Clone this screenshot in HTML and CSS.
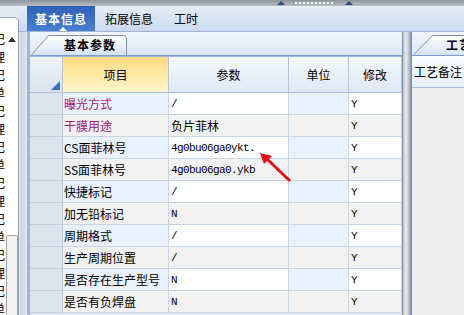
FILE: index.html
```html
<!DOCTYPE html>
<html lang="zh">
<head>
    <meta charset="UTF-8">
    <title>基本信息</title>
    <link rel="stylesheet" href="styles.css">
</head>
<body>
    <div class="topstrip">
        <span class="mark"></span>
        <span class="dots"></span>
        <span class="mark"></span>
    </div>

    <div class="main">
        <div class="leftpanel">
            <div class="lp-top"></div>
            <div class="lp-box">
                <div class="lp-text">
                    <div>看记</div><div>管理</div><div>看记</div><div>工单</div><div>看记</div>
                    <div>管理</div><div>看记</div><div>工单</div><div>看记</div><div>管理</div>
                    <div>看记</div><div>工单</div><div>看记</div><div>管理</div><div>看记</div>
                    <div>工单</div>
                </div>
                <div class="lp-scroll">
                    <div class="lp-up"></div>
                    <div class="lp-track"></div>
                    <div class="lp-thumb"></div>
                </div>
            </div>
        </div>

        <div class="content">
            <div class="tabbar">
                <div class="tab active">基本信息</div>
                <div class="tab">拓展信息</div>
                <div class="tab">工时</div>
            </div>

            <div class="body">
                <div class="gap"></div>

                <div class="workpane">
                    <div class="subtabs">
                        <div class="subtab">
                            <svg class="tabshape" width="96" height="21" viewBox="0 0 96 21">
                                <defs>
                                    <linearGradient id="tg" x1="0" y1="0" x2="0" y2="1">
                                        <stop offset="0" stop-color="#ffffff"/>
                                        <stop offset="1" stop-color="#d6e3f5"/>
                                    </linearGradient>
                                </defs>
                                <path d="M0.5 21 L17.5 1.5 L92 1.5 Q95.5 1.5 95.5 5 L95.5 21" fill="url(#tg)" stroke="#7f90ab"/>
                            </svg>
                            <span class="subtab-label">基本参数</span>
                        </div>
                    </div>

                    <div class="grid">
                        <div class="hd corner"><span class="tri"></span></div>
                        <div class="hd sel">项目</div>
                        <div class="hd">参数</div>
                        <div class="hd">单位</div>
                        <div class="hd">修改</div>

                        <div class="rh"></div>
                        <div class="cell hl item purple">曝光方式</div>
                        <div class="cell val">/</div>
                        <div class="cell hl"></div>
                        <div class="cell val">Y</div>

                        <div class="rh"></div>
                        <div class="cell alt item purple">干膜用途</div>
                        <div class="cell alt cjk">负片菲林</div>
                        <div class="cell alt"></div>
                        <div class="cell alt val">Y</div>

                        <div class="rh"></div>
                        <div class="cell hl item">CS面菲林号</div>
                        <div class="cell val">4g0bu06ga0ykt.</div>
                        <div class="cell hl"></div>
                        <div class="cell val">Y</div>

                        <div class="rh"></div>
                        <div class="cell alt item">SS面菲林号</div>
                        <div class="cell alt val">4g0bu06ga0.ykb</div>
                        <div class="cell alt"></div>
                        <div class="cell alt val">Y</div>

                        <div class="rh"></div>
                        <div class="cell hl item">快捷标记</div>
                        <div class="cell val">/</div>
                        <div class="cell hl"></div>
                        <div class="cell val">Y</div>

                        <div class="rh"></div>
                        <div class="cell alt item">加无铅标记</div>
                        <div class="cell alt val">N</div>
                        <div class="cell alt"></div>
                        <div class="cell alt val">Y</div>

                        <div class="rh"></div>
                        <div class="cell hl item">周期格式</div>
                        <div class="cell val">/</div>
                        <div class="cell hl"></div>
                        <div class="cell val">Y</div>

                        <div class="rh"></div>
                        <div class="cell alt item">生产周期位置</div>
                        <div class="cell alt val">/</div>
                        <div class="cell alt"></div>
                        <div class="cell alt val">Y</div>

                        <div class="rh"></div>
                        <div class="cell hl item">是否存在生产型号</div>
                        <div class="cell val">N</div>
                        <div class="cell hl"></div>
                        <div class="cell val">Y</div>

                        <div class="rh"></div>
                        <div class="cell alt item">是否有负焊盘</div>
                        <div class="cell alt val">N</div>
                        <div class="cell alt"></div>
                        <div class="cell alt val">Y</div>
                    </div>
                </div>

                <div class="splitter"></div>

                <div class="rightpane">
                    <div class="subtabs">
                        <div class="subtab small">
                            <svg class="tabshape" width="60" height="21" viewBox="0 0 60 21">
                                <path d="M0.5 21 L19.5 1.5 L60 1.5 L60 21" fill="url(#tg)" stroke="#7f90ab"/>
                            </svg>
                            <span class="subtab-label">工艺备注</span>
                        </div>
                    </div>
                    <div class="rp-head">工艺备注</div>
                    <div class="rp-body"></div>
                </div>
            </div>
        </div>
    </div>

    <svg class="arrow" width="40" height="40" viewBox="0 0 40 40">
        <line x1="35" y1="33" x2="12" y2="11" stroke="#e01010" stroke-width="3"/>
        <polygon points="5,5 17,8 9,16" fill="#e01010"/>
    </svg>
</body>
</html>
```

FILE: styles.css
```css
* {
    margin: 0;
    padding: 0;
    box-sizing: border-box;
}

body {
    position: relative;
    width: 464px;
    height: 315px;
    overflow: hidden;
    font-family: "Noto Sans CJK SC", sans-serif;
    font-size: 12px;
    color: #000;
    background: #dfe7f2;
}

/* top grip strip */
.topstrip {
    height: 6px;
    background: linear-gradient(#8d939b, #b9bec6);
    display: flex;
    align-items: center;
    padding-left: 277px;
}

.mark {
    width: 0;
    height: 0;
    border-left: 4px solid transparent;
    border-right: 4px solid transparent;
    border-bottom: 4px solid #2f4a78;
}

.dots {
    width: 38px;
    height: 2px;
    margin: 0 12px 0 10px;
    background: repeating-linear-gradient(90deg, #ffffff 0 2px, transparent 2px 4px);
}

.main {
    display: flex;
    height: 309px;
}

/* left list panel */
.leftpanel {
    width: 21px;
    display: flex;
    flex-direction: column;
    background: #e3e8ef;
}

.lp-top {
    height: 11px;
}

.lp-box {
    flex: 1;
    display: flex;
    background: #fff;
    border-top: 1px solid #a3acba;
    border-right: 1px solid #8f99a8;
    border-top-right-radius: 5px;
    overflow: hidden;
}

.lp-text {
    width: 5px;
    overflow: hidden;
    padding-top: 12px;
    line-height: 18px;
    white-space: nowrap;
}

.lp-text div {
    margin-left: -19px;
}

.lp-scroll {
    width: 13px;
    display: flex;
    flex-direction: column;
    align-items: center;
    padding-top: 19px;
}

.lp-up {
    width: 0;
    height: 0;
    border-left: 4px solid transparent;
    border-right: 4px solid transparent;
    border-bottom: 5px solid #333;
}

.lp-track {
    flex: 1;
}

.lp-thumb {
    width: 12px;
    height: 80px;
    border: 1px solid #9ea4ac;
    border-bottom: none;
    border-radius: 2px 2px 0 0;
    background: #f4f4f4;
}

.content {
    flex: 1;
    display: flex;
    flex-direction: column;
}

/* main tabs */
.tabbar {
    height: 26px;
    display: flex;
    padding-left: 8px;
    background: linear-gradient(#e6edf7, #cbdaef);
    border-bottom: 1px solid #9fb3d2;
}

.tab {
    position: relative;
    width: 68px;
    display: flex;
    align-items: center;
    justify-content: center;
}

.tab:last-child {
    width: 46px;
}

.tab.active {
    color: #fff;
    font-weight: bold;
    letter-spacing: 1px;
    background: linear-gradient(#2f62b8, #4a7fcf);
}

.tab.active::after {
    content: "";
    position: absolute;
    bottom: 0;
    left: 32px;
    border-left: 4px solid transparent;
    border-right: 4px solid transparent;
    border-bottom: 4px solid #fff;
}

.body {
    flex: 1;
    display: flex;
}

.gap {
    width: 8px;
    background: linear-gradient(90deg, #c9d2de, #dfe6ef);
    border-left: 1px solid #e9edf3;
}

.workpane {
    width: 375px;
    display: flex;
    flex-direction: column;
    border-left: 3px solid #a7b5c9;
}

.subtabs {
    height: 24px;
    display: flex;
    align-items: flex-end;
    background: linear-gradient(#f1f5fb, #dbe6f5);
    border-bottom: 1px solid #7c9ccf;
}

.subtab {
    position: relative;
    width: 96px;
    height: 21px;
    margin-left: 1px;
    display: flex;
    align-items: center;
    padding-left: 33px;
}

.tabshape {
    position: absolute;
    left: 0;
    top: 0;
}

.subtab-label {
    position: relative;
    font-weight: bold;
    letter-spacing: 1px;
    white-space: nowrap;
}

/* data grid */
.grid {
    display: grid;
    grid-template-columns: 33px 106px 120px 60px 53px;
    grid-template-rows: 36px;
    grid-auto-rows: 22px;
    background: #fff;
    border-top: 1px solid #9bb5de;
}

.hd {
    display: flex;
    align-items: center;
    justify-content: center;
    background: linear-gradient(#f6f9fd, #dee8f5);
    border-right: 1px solid #b3c4dc;
    border-bottom: 1px solid #a9bcd8;
}

.hd.sel {
    background: linear-gradient(#ffdc7e, #fff4cf);
}

.hd.corner {
    position: relative;
    background: linear-gradient(#eef3f9, #d9e2ee);
}

.tri {
    position: absolute;
    right: 2px;
    bottom: 2px;
    border-left: 9px solid transparent;
    border-bottom: 9px solid #3c6fbf;
}

.rh {
    background: #dce4ee;
    border-right: 1px solid #b7c5d8;
    border-bottom: 1px solid #c3cfdf;
}

.cell {
    display: flex;
    align-items: center;
    padding-left: 2px;
    white-space: nowrap;
    overflow: hidden;
    border-right: 1px solid #c9d6e8;
    border-bottom: 1px solid #c9d6e8;
}

.cell.item {
    padding-left: 1px;
}

.cell.hl {
    background: #e9f1fc;
}

.cell.alt {
    background: #f2f2f2;
}

.purple {
    color: #a0207e;
}

.val {
    font-family: "Liberation Mono", monospace;
    font-size: 11px;
    letter-spacing: -0.6px;
}

/* splitter and right pane */
.splitter {
    width: 10px;
    background: linear-gradient(90deg, #7e97c2 0 1px, #b9bdc4 1px, #eceef1 4px, #a8adb5 8px, #7390c2 9px);
}

.rightpane {
    flex: 1;
    display: flex;
    flex-direction: column;
    background: #efefef;
    overflow: hidden;
}

.subtab.small {
    width: 60px;
    padding-left: 33px;
}

.rp-head {
    height: 32px;
    padding-left: 2px;
    display: flex;
    align-items: center;
    white-space: nowrap;
    background: linear-gradient(#fbfdff, #e6eef8);
    border-bottom: 1px solid #a9bcd8;
}

.rp-body {
    flex: 1;
}

.arrow {
    position: absolute;
    left: 255px;
    top: 148px;
}
```
